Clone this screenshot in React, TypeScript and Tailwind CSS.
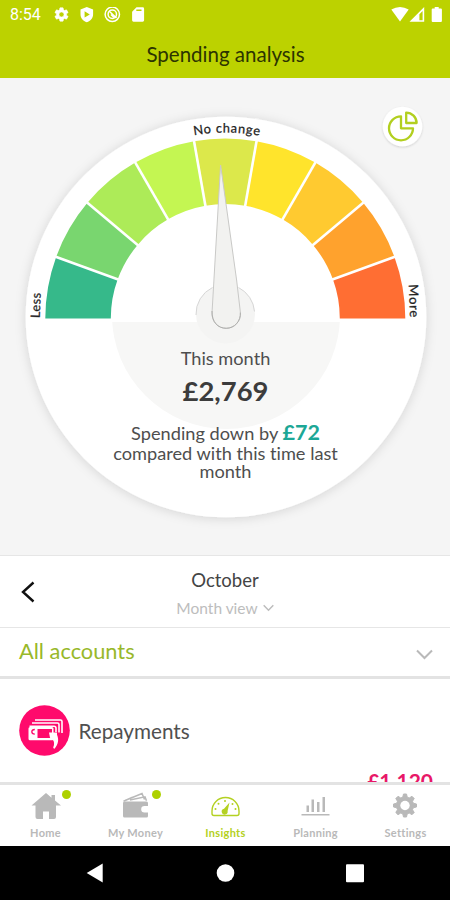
import type { ReactNode } from "react";

const CX = 225.3;
const CY = 318.5;
const OUTER = 180;
const INNER = 114.5;

const segmentColors = [
  "#36b98a",
  "#79d66f",
  "#adeb58",
  "#c4f652",
  "#dce84b",
  "#ffe42c",
  "#ffca30",
  "#ffa22d",
  "#ff6e33",
];

function polar(radius: number, degrees: number) {
  const a = (degrees * Math.PI) / 180;
  return `${(CX - radius * Math.cos(a)).toFixed(2)} ${(CY - radius * Math.sin(a)).toFixed(2)}`;
}

function segmentPath(index: number) {
  const from = index * 20;
  const to = from + 20;
  return `M${polar(OUTER, from)}A${OUTER} ${OUTER} 0 0 1 ${polar(OUTER, to)}L${polar(INNER, to)}A${INNER} ${INNER} 0 0 0 ${polar(INNER, from)}Z`;
}

function StatusBar() {
  return (
    <div className="flex h-[30px] items-center pl-[10px] pr-[8px] text-white">
      <span className="w-[44px] font-[Roboto,sans-serif] text-[16px] leading-none">8:54</span>
      <svg className="h-[16px] w-[96px]" viewBox="54 7 96 16" fill="#fff">
        <g transform="translate(53.1 6.1) scale(.7)">
          <path stroke="#fff" strokeWidth=".8" d="M19.14 12.94c.04-.3.06-.61.06-.94 0-.32-.02-.64-.07-.94l2.03-1.58a.49.49 0 0 0 .12-.61l-1.92-3.32a.49.49 0 0 0-.59-.22l-2.39.96c-.5-.38-1.03-.7-1.62-.94l-.36-2.54a.48.48 0 0 0-.48-.41h-3.84a.48.48 0 0 0-.47.41l-.36 2.54c-.59.24-1.13.57-1.62.94l-2.39-.96a.48.48 0 0 0-.59.22L2.74 8.87a.48.48 0 0 0 .12.61l2.03 1.58c-.05.3-.09.63-.09.94s.02.64.07.94l-2.03 1.58a.49.49 0 0 0-.12.61l1.92 3.32c.12.22.37.29.59.22l2.39-.96c.5.38 1.03.7 1.62.94l.36 2.54c.05.24.24.41.48.41h3.84c.24 0 .44-.17.47-.41l.36-2.54c.59-.24 1.13-.56 1.62-.94l2.39.96c.22.08.47 0 .59-.22l1.92-3.32a.48.48 0 0 0-.12-.61zM12 15.6A3.6 3.6 0 1 1 12 8.4a3.6 3.6 0 0 1 0 7.2z" />
        </g>
        <path fillRule="evenodd" d="M86.8 7l6.3 2.6v4.6c0 4-2.6 6.8-6.3 8-3.7-1.2-6.3-4-6.3-8V9.600zM84.600 11.200v6.400l5.200-3.200z" />
        <g fill="none" stroke="#fff">
          <circle cx="112.300" cy="14.300" r="7.200" strokeWidth="1.500" />
          <circle cx="112.300" cy="14.300" r="4.200" strokeWidth="1.500" />
          <path d="M109 11l7.500 7M111 14.500l3 3" strokeWidth="1.500" />
        </g>
        <path fillRule="evenodd" d="M136.500 7.300h6.200a1.400 1.400 0 0 1 1.400 1.400v11.600a1.400 1.400 0 0 1-1.400 1.400h-9.200a1.400 1.400 0 0 1-1.400-1.400v-8.600zM136.300 9.500v1.600h5.200V9.500z" />
      </svg>
      <svg className="ml-auto h-[16px] w-[51px]" viewBox="391 7 51 16" fill="#fff">
        <path d="M391.300 9.500q8.700-5 17.400 0L400 21.500z" />
        <path fillRule="evenodd" d="M424.200 7v14.800H409.500zM422.600 11v9.300h-3.200v-6.100z" />
        <path d="M434.700 6.800h4v1.700h2.200a1 1 0 0 1 1 1v11.400a1 1 0 0 1-1 1h-8.200a1 1 0 0 1-1-1V9.500a1 1 0 0 1 1-1h2z" />
      </svg>
    </div>
  );
}

function Gauge() {
  return (
    <section className="grid h-[477px] shrink-0 bg-[#f5f5f5]">
      <svg
        className="h-[477px] w-[450px] [grid-area:1/1]"
        viewBox="0 78 450 477"
        fontFamily="Lato, sans-serif"
      >
        <defs>
          <filter id="dialShadow" x="-10%" y="-10%" width="120%" height="120%">
            <feDropShadow dx="0" dy="1" stdDeviation="5.500" floodColor="#000" floodOpacity=".14" />
          </filter>
          <filter id="buttonShadow" x="-20%" y="-20%" width="140%" height="150%">
            <feDropShadow dx="0" dy="1" stdDeviation="1.200" floodColor="#000" floodOpacity=".16" />
          </filter>
          <clipPath id="lowerHalf">
            <rect x="100" y="322" width="250" height="120" />
          </clipPath>
          <path id="topLabel" d="M38.300 319.500a187 187 0 0 1 374 0" />
        </defs>
        <circle cx="226" cy="317" r="200.300" fill="#fff" filter="url(#dialShadow)" />
        {segmentColors.map((color, i) => (
          <path key={color} d={segmentPath(i)} fill={color} />
        ))}
        {segmentColors.slice(1).map((color, i) => (
          <path
            key={color}
            d={`M${polar(INNER - 2, (i + 1) * 20)}L${polar(OUTER + 2, (i + 1) * 20)}`}
            stroke="#fff"
            strokeWidth="2.600"
          />
        ))}
        <circle cx="226" cy="315" r="114" fill="#f7f7f6" clipPath="url(#lowerHalf)" />
        <circle cx="225.500" cy="314" r="29.500" fill="#f4f4f3" />
        <path d="M196 315a29.500 29.500 0 0 1 16.500-27.500M238.500 287.500a29.500 29.500 0 0 1 16 24" fill="none" stroke="#d6d6d6" strokeWidth="1" />
        <path
          d="M220.600 165L212 313c-.3 9 6 15.300 14.200 15.300s14.800-7 14.200-15.800L236.600 280z"
          fill="#f2f2f0"
          stroke="#c9c9c7"
          strokeWidth="1"
          strokeLinejoin="round"
        />
        <path d="M212 311c-.3 11 6 17.300 14.200 17.300s14.800-7 14.200-15.800" fill="none" stroke="#b0b0ae" strokeWidth="1" />
        <text fontSize="12.800" fill="#222" stroke="#222" strokeWidth=".25" letterSpacing=".7" textAnchor="middle">
          <textPath href="#topLabel" startOffset="50.300%">No change</textPath>
        </text>
        <text transform="translate(39.800 318.300) rotate(-88)" fontSize="12.800" fill="#222" stroke="#222" strokeWidth=".25" letterSpacing=".5">
          Less
        </text>
        <text transform="translate(408.800 284.500) rotate(88)" fontSize="13" fill="#222" stroke="#222" strokeWidth=".25" letterSpacing=".8">
          More
        </text>
        <circle cx="402.500" cy="126.500" r="19.800" fill="#fff" filter="url(#buttonShadow)" />
        <g fill="none" stroke="#b2cf1f" strokeWidth="2.300" strokeLinejoin="round">
          <path d="M401 116.300a12 12 0 1 0 12 12h-12z" />
          <path d="M406.200 112.600v10.400h10.400a10.400 10.400 0 0 0-10.400-10.400z" />
        </g>
      </svg>
      <div className="flex flex-col items-center pl-px pt-[269px] text-center text-[#4e4e4e] [grid-area:1/1]">
        <p className="text-[18.200px] leading-[22px]">This month</p>
        <p className="mt-[5px] text-[27.400px] font-bold leading-[34px] text-[#3c3c3c]">£2,769</p>
        <div className="mt-[14px] text-[18.200px] leading-[18.400px]">
          <p>
            Spending down by <b className="text-[21.500px] leading-none text-[#1ca796]">£72</b>
          </p>
          <p>compared with this time last</p>
          <p>month</p>
        </div>
      </div>
    </section>
  );
}

function NavItem({ label, active, dot, children }: { label: string; active?: boolean; dot?: boolean; children: ReactNode }) {
  return (
    <div className={`flex w-[90px] flex-col items-center ${active ? "text-[#b4d122]" : "text-[#b9b9b9]"}`}>
      <div className="relative h-[38px] w-[60px]">
        <svg className="h-[38px] w-[60px]" viewBox="0 0 60 38" fill="currentColor">
          {children}
        </svg>
        {dot && <i className="absolute left-[46.500px] top-[4.500px] size-[9px] rounded-full bg-[#aed100]" />}
      </div>
      <span className="mt-[3px] pl-px text-[11px] font-bold leading-[14px] tracking-[.3px]">{label}</span>
    </div>
  );
}

export default function App() {
  return (
    <main className="flex h-[900px] w-[450px] flex-col overflow-hidden bg-white font-[Lato,sans-serif] [font-variant-ligatures:none]">
      <header className="h-[78px] shrink-0 bg-[#bcd200]">
        <StatusBar />
        <h1 className="pl-px pt-[11px] text-center text-[20.500px] leading-[26px] text-[#2c3400]">Spending analysis</h1>
      </header>

      <Gauge />

      <section className="flex h-[73px] shrink-0 items-center border-y border-[#e6e6e6] px-[20px]">
        <svg className="h-[24px] w-[16px]" viewBox="0 0 16 24" fill="none" stroke="#111" strokeWidth="2.400">
          <path d="M13.500 2.500L3 12l10.500 9.500" />
        </svg>
        <div className="flex-1 pr-[16px] pt-[3px] text-center">
          <p className="text-[18.500px] leading-[24px] text-[#444]">October</p>
          <p className="mt-[6px] flex items-center justify-center gap-[5px] text-[15.500px] leading-[20px] text-[#bdbdbd]">
            Month view
            <svg className="h-[8px] w-[11px]" viewBox="0 0 11 8" fill="none" stroke="currentColor" strokeWidth="1.500">
              <path d="M.7 1.200l4.800 5 4.800-5" />
            </svg>
          </p>
        </div>
      </section>

      <section className="flex h-[51px] shrink-0 items-center justify-between border-b-[3px] border-[#e3e3e3] pl-[19px] pr-[17px]">
        <span className="-mt-[3px] text-[21.800px] leading-[28px] text-[#98b82a]">All accounts</span>
        <svg className="mt-[5px] h-[11px] w-[17px]" viewBox="0 0 17 11" fill="none" stroke="#b9b9b9" strokeWidth="2">
          <path d="M1 1.500l7.500 7.500L16 1.500" />
        </svg>
      </section>

      <section className="h-[106px] shrink-0 overflow-hidden border-b-[3px] border-[#e3e3e3]">
        <div className="flex items-center gap-[9px] pl-[18.500px] pt-[26px]">
          <svg className="size-[51px]" viewBox="18.500 705 51 51">
            <circle cx="44" cy="730.500" r="25.300" fill="#ff0a6c" />
            <g fill="none" stroke="#fff" strokeWidth="1.600">
              <path d="M34.500 720h25.500a1.500 1.500 0 0 1 1.500 1.500V733" />
              <path d="M31.500 723h25.500a1.500 1.500 0 0 1 1.500 1.500v8" />
              <path d="M29 726.200h24.500q2 0 2 2V732" />
            </g>
            <path fill="#fff" fillRule="evenodd" d="M29.500 727h22a1.500 1.500 0 0 1 1.500 1.500v10.300a1.500 1.500 0 0 1-1.500 1.500h-22a1.500 1.500 0 0 1-1.500-1.500v-10.300a1.500 1.500 0 0 1 1.500-1.500zM37 729v9h14.500v-9z" />
            <path d="M34.300 729.500q-3 0-3 2.300t3 2.300" fill="none" stroke="#ff0a6c" strokeWidth="1.300" />
            <path d="M48.500 732.500h8v2.200c2 4.500 1.500 9.500-2.500 14-1-.3-1.500-.8-1.200-1.700 1-2 1-4 .2-6.200l-3.500-3z" fill="#fff" />
          </svg>
          <span className="text-[20.700px] leading-[26px] text-[#505050]">Repayments</span>
        </div>
        <p className="mt-[12px] pr-[17px] text-right text-[21px] font-bold leading-[26px] text-[#e81868]">£1,120</p>
      </section>

      <nav className="flex h-[61px] shrink-0">
        <NavItem label="Home" dot>
          <path d="M31 8L16.500 20.500h4V32a2 2 0 0 0 2 2H28v-7.500h6V34h5a2 2 0 0 0 2-2V20.500h5l-6-5V10h-3.500v2.800z" />
        </NavItem>
        <NavItem label="My Money" dot>
          <path d="M19.500 16.500h22a1.500 1.500 0 0 1 1.500 1.500v3h-3.500a3.300 3.300 0 0 0 0 6.600H43V31a1.500 1.500 0 0 1-1.500 1.500h-22A1.500 1.500 0 0 1 18 31V18a1.500 1.500 0 0 1 1.500-1.500z" />
          <path d="M20 15.500l17-7 2.500 6M25 15l15-3.200 1.500 4M18.500 16.200l9-4" fill="none" stroke="currentColor" strokeWidth="1.500" />
        </NavItem>
        <NavItem label="Insights" active>
          <path d="M19 30.500h23a2 2 0 0 0 2-2V26a13.500 13.500 0 0 0-27 0v2.500a2 2 0 0 0 2 2z" fill="none" stroke="currentColor" strokeWidth="1.400" />
          <path d="M34.500 17.500l-5.500 6.200a3 3 0 1 0 3.600 2.300z" />
          <g>
            <circle cx="20.500" cy="24" r="1" />
            <circle cx="23.500" cy="18.800" r="1" />
            <circle cx="30" cy="16" r="1" />
            <circle cx="37.500" cy="19" r="1" />
            <circle cx="40.500" cy="24" r="1" />
          </g>
        </NavItem>
        <NavItem label="Planning">
          <path d="M21.500 20.500h2.500V27h-2.500zM26.500 14.500H29V27h-2.500zM32 17h2.500v10H32zM37.500 12H40v15h-2.500zM16.500 29h28v1.500h-28z" />
        </NavItem>
        <NavItem label="Settings">
          <path d="M28.500 9h3l.7 3.100 2 .9 2.800-1.700 2.200 2.200-1.700 2.800.9 2 3.100.7v3l-3.100.7-.9 2 1.700 2.800-2.200 2.200-2.800-1.700-2 .9-.7 3.100h-3l-.7-3.100-2-.9-2.800 1.700-2.200-2.200 1.700-2.800-.9-2-3.100-.7v-3l3.100-.7.9-2-1.700-2.800 2.200-2.200 2.800 1.700 2-.9z" stroke="currentColor" strokeLinejoin="round" />
          <circle cx="30" cy="20.500" r="4.700" fill="#fff" />
        </NavItem>
      </nav>

      <footer className="h-[54px] shrink-0 bg-black">
        <svg className="h-[54px] w-[450px]" viewBox="0 846 450 54" fill="#fff">
          <path d="M102.700 863.500v19L86.700 873z" />
          <circle cx="225.500" cy="873" r="8.800" />
          <rect x="346" y="864.300" width="18" height="18" rx="1" />
        </svg>
      </footer>
    </main>
  );
}
